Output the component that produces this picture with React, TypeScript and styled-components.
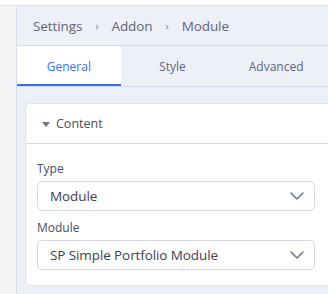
import { FC } from 'react';
import styled, { createGlobalStyle } from 'styled-components';

const GlobalStyle = createGlobalStyle`
  html, body {
    margin: 0;
    padding: 0;
    overflow: hidden;
  }
  body {
    font-family: "Open Sans", "Noto Sans", sans-serif;
    background: #eef0f8;
  }
`;

const Page = styled.div`
  display: flex;
  flex-direction: column;
  width: 328px;
  height: 294px;
  overflow: hidden;
`;

const TopStrip = styled.div`
  height: 5px;
  background: #ffffff;
  border-bottom: 1px solid #dfe1ec;
  flex-shrink: 0;
`;

const Body = styled.div`
  display: flex;
  flex: 1;
  min-height: 0;
`;

const SideRail = styled.div`
  width: 16px;
  flex-shrink: 0;
  background: #f4f4f6;
  border-right: 1px solid #d9dcef;
`;

const Panel = styled.div`
  flex: 1;
  display: flex;
  flex-direction: column;
  background: #eef0f8;
  min-width: 0;
`;

const Breadcrumb = styled.div`
  height: 39px;
  display: flex;
  align-items: center;
  gap: 13px;
  padding-left: 16px;
  border-bottom: 1px solid #d6d9ec;
  font-size: 13.5px;
  letter-spacing: -0.1px;
  color: #5f6580;
`;

const Sep = styled.span`
  font-size: 11px;
  color: #7d8299;
`;

const Tabs = styled.div`
  display: flex;
  height: 40px;
  border-bottom: 1px solid #d6d9ec;
`;

const Tab = styled.div<{ $active?: boolean }>`
  flex: 1;
  display: flex;
  align-items: center;
  justify-content: center;
  font-size: 12px;
  color: ${p => (p.$active ? '#3a6ff2' : '#5f6580')};
  background: ${p => (p.$active ? '#ffffff' : 'transparent')};
  box-shadow: ${p => (p.$active ? 'inset 0 -2px 0 #3a6ff2' : 'none')};
`;

const Content = styled.div`
  padding: 16px 0 0 8px;
`;

const Card = styled.div`
  width: 310px;
  background: #ffffff;
  border: 1px solid #dde0ee;
  border-radius: 5px;
`;

const CardHeader = styled.div`
  height: 39px;
  display: flex;
  align-items: center;
  gap: 6px;
  padding-left: 16px;
  border-bottom: 1px solid #d6d9ec;
  font-size: 12.5px;
  color: #4a4f63;
`;

const Caret = styled.span`
  width: 0;
  height: 0;
  border-left: 4.5px solid transparent;
  border-right: 4.5px solid transparent;
  border-top: 5px solid #6a7191;
  margin-top: 1px;
`;

const CardBody = styled.div`
  padding: 16px 12px 15px 11px;
  display: flex;
  flex-direction: column;
`;

const Label = styled.div`
  font-size: 12px;
  color: #4a4f63;
  line-height: 18px;
  margin-bottom: 3px;
`;

const Select = styled.div`
  height: 30px;
  width: 278px;
  border: 1px solid #d3d7e8;
  border-radius: 5px;
  display: flex;
  align-items: center;
  justify-content: space-between;
  padding: 0 10px 0 12px;
  box-sizing: border-box;
  font-size: 13.5px;
  letter-spacing: -0.1px;
  color: #3c4155;
  margin-bottom: 8px;
  &:last-child {
    margin-bottom: 0;
  }
`;

const Chevron: FC = () => (
  <svg width="14" height="8" viewBox="0 0 14 8" fill="none">
    <path d="M1 1l6 6 6-6" stroke="#6b7394" strokeWidth="1.5" strokeLinecap="round" strokeLinejoin="round" />
  </svg>
);

export default function App() {
  return (
    <Page>
      <GlobalStyle />
      <TopStrip />
      <Body>
        <SideRail />
        <Panel>
          <Breadcrumb>
            <span>Settings</span>
            <Sep>›</Sep>
            <span>Addon</span>
            <Sep>›</Sep>
            <span>Module</span>
          </Breadcrumb>
          <Tabs>
            <Tab $active>General</Tab>
            <Tab>Style</Tab>
            <Tab>Advanced</Tab>
          </Tabs>
          <Content>
            <Card>
              <CardHeader>
                <Caret />
                Content
              </CardHeader>
              <CardBody>
                <Label>Type</Label>
                <Select>
                  Module
                  <Chevron />
                </Select>
                <Label>Module</Label>
                <Select>
                  SP Simple Portfolio Module
                  <Chevron />
                </Select>
              </CardBody>
            </Card>
          </Content>
        </Panel>
      </Body>
    </Page>
  );
}
